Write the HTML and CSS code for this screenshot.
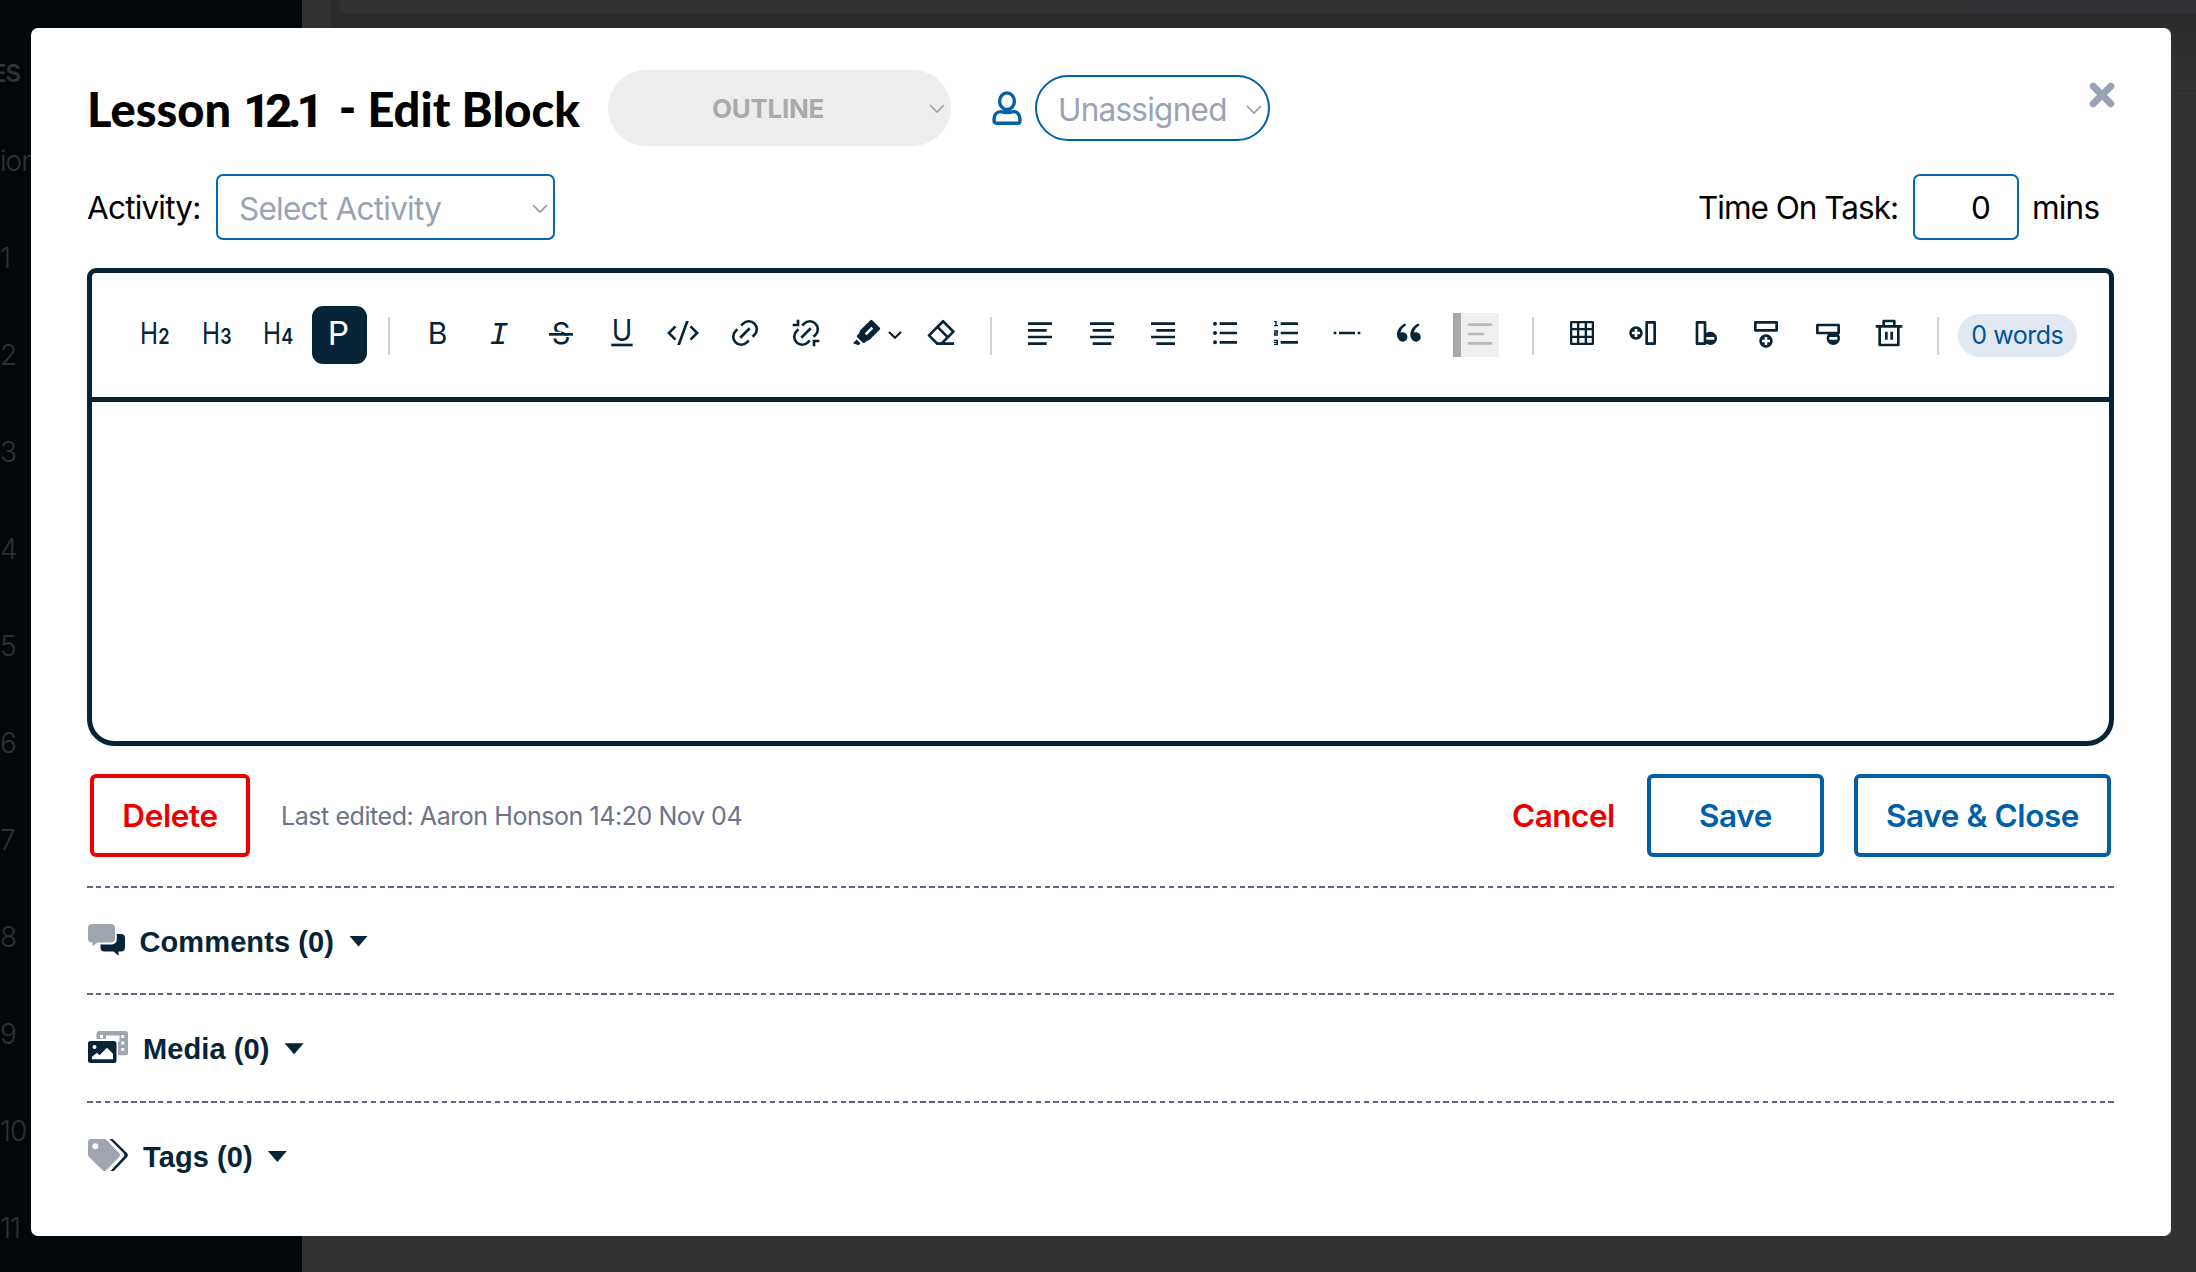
FILE: index.html
```html
<!DOCTYPE html>
<html lang="en">
<head>
<meta charset="utf-8">
<title>Lesson 12.1 - Edit Block</title>
<link rel="stylesheet" href="styles.css">
</head>
<body>
<div class="page">
  <aside class="sidebar">
    <div class="side-title">ES</div>
    <div class="side-item side-first">ion</div>
    <div class="side-item">1</div>
    <div class="side-item">2</div>
    <div class="side-item">3</div>
    <div class="side-item">4</div>
    <div class="side-item">5</div>
    <div class="side-item">6</div>
    <div class="side-item">7</div>
    <div class="side-item">8</div>
    <div class="side-item">9</div>
    <div class="side-item">10</div>
    <div class="side-item">11</div>
  </aside>
  <main class="backdrop">
    <div class="panel"><div class="panel-main"></div><div class="panel-side"></div></div>
    <div class="band"></div>
  </main>
</div>

<section class="modal">
  <header class="head">
    <h1 class="title">Lesson <span class="digits">12.1</span> <span class="dash">-</span> Edit Block</h1>
    <div class="status"><span class="status-text">OUTLINE</span>
      <svg class="chev" viewBox="0 0 16 9"><path d="M1 1l7 7 7-7"/></svg></div>
    <svg class="user" viewBox="0 0 30 34"><ellipse cx="15" cy="10.2" rx="7.4" ry="8.3"/><path d="M8.6 20.6c2.2 0 3.2 1 6.4 1s4.2-1 6.4-1c3.600 0 6.500 3 6.500 6.900v2.400c0 1.500-.9 2.400-2.300 2.400H4.400c-1.400 0-2.300-.9-2.300-2.400v-2.400c0-3.900 2.900-6.900 6.500-6.900z"/></svg>
    <div class="assignee"><span class="ph">Unassigned</span>
      <svg class="chev" viewBox="0 0 16 9"><path d="M1 1l7 7 7-7"/></svg></div>
    <svg class="close" viewBox="0 0 26 26"><path d="M4.200 4.200l17.600 17.600M21.800 4.200L4.200 21.800"/></svg>
  </header>

  <div class="meta">
    <label class="lbl">Activity:</label>
    <div class="select"><span class="ph">Select Activity</span>
      <svg class="chev" viewBox="0 0 16 9"><path d="M1 1l7 7 7-7"/></svg></div>
    <label class="lbl task">Time On Task:</label>
    <div class="num">0</div>
    <span class="lbl mins">mins</span>
  </div>

  <div class="editor">
    <div class="toolbar">
      <button class="tb"><svg viewBox="0 0 24 24"><text class="g" x="0.800" y="20" textLength="13.500" lengthAdjust="spacingAndGlyphs">H</text><text class="g sub" x="14.400" y="20" textLength="8.500" lengthAdjust="spacingAndGlyphs">2</text></svg></button>
      <button class="tb"><svg viewBox="0 0 24 24"><text class="g" x="0.800" y="20" textLength="13.500" lengthAdjust="spacingAndGlyphs">H</text><text class="g sub" x="14.400" y="20" textLength="8.500" lengthAdjust="spacingAndGlyphs">3</text></svg></button>
      <button class="tb"><svg viewBox="0 0 24 24"><text class="g" x="0.800" y="20" textLength="13.500" lengthAdjust="spacingAndGlyphs">H</text><text class="g sub" x="14.400" y="20" textLength="9" lengthAdjust="spacingAndGlyphs">4</text></svg></button>
      <button class="tb"><span class="on"><svg viewBox="0 0 24 24"><text class="g para" x="3.500" y="21" textLength="16" lengthAdjust="spacingAndGlyphs">P</text></svg></span></button>
      <i class="sep"></i>
      <button class="tb"><svg viewBox="0 0 24 24"><text class="g" x="4.400" y="20" textLength="14.800" lengthAdjust="spacingAndGlyphs">B</text></svg></button>
      <button class="tb"><svg viewBox="0 0 24 24"><text class="g mono" x="4.600" y="20">I</text></svg></button>
      <button class="tb"><svg viewBox="0 0 24 24"><text class="g" x="5" y="20" textLength="14" lengthAdjust="spacingAndGlyphs">S</text><path class="knock" d="M3 11h9v1H3zM12 14h9v1h-9z"/><path d="M3 12h18v2H3z"/></svg></button>
      <button class="tb"><svg viewBox="0 0 24 24"><text class="g" x="4.300" y="18" textLength="15.400" lengthAdjust="spacingAndGlyphs">U</text><path d="M4 20h16v2H4z"/></svg></button>
      <button class="tb"><svg viewBox="0 0 24 24"><path d="M24 12l-5.657 5.657-1.414-1.414L21.172 12l-4.243-4.243 1.414-1.414L24 12zM2.828 12l4.243 4.243-1.414 1.414L0 12l5.657-5.657L7.070 7.757 2.828 12zm6.960 9H7.660l6.552-18h2.128L9.788 21z"/></svg></button>
      <button class="tb"><svg viewBox="0 0 24 24"><path d="M18.364 15.536L16.950 14.120l1.414-1.414a5 5 0 1 0-7.071-7.071L9.879 7.050 8.464 5.636 9.880 4.222a7 7 0 0 1 9.900 9.900l-1.415 1.414zm-2.828 2.828l-1.415 1.414a7 7 0 0 1-9.900-9.900l1.415-1.414L7.050 9.880l-1.414 1.414a5 5 0 1 0 7.071 7.071l1.414-1.414 1.415 1.414zm-.708-10.607l1.415 1.415-7.071 7.070-1.415-1.414 7.071-7.070z"/></svg></button>
      <button class="tb"><svg viewBox="0 0 24 24"><path d="M17 17h5v2h-3v3h-2v-5zM7 7H2V5h3V2h2v5zm11.364 8.536L16.950 14.120l1.414-1.414a5 5 0 1 0-7.071-7.071L9.879 7.050 8.464 5.636 9.880 4.222a7 7 0 0 1 9.900 9.900l-1.415 1.414zm-2.828 2.828l-1.415 1.414a7 7 0 0 1-9.900-9.900l1.415-1.414L7.050 9.880l-1.414 1.414a5 5 0 1 0 7.071 7.071l1.414-1.414 1.415 1.414zm-.708-10.607l1.415 1.415-7.071 7.070-1.415-1.414 7.071-7.070z"/></svg></button>
      <button class="tb pen"><svg viewBox="0 0 24 24"><path fill-rule="evenodd" d="M21.607 8.050a1 1 0 0 1 0 1.414l-7.779 7.779-2.120.707-1.415 1.414a1 1 0 0 1-1.414 0l-4.243-4.243a1 1 0 0 1 0-1.414l1.414-1.414.707-2.121 7.779-7.779a1 1 0 0 1 1.414 0l5.657 5.657zm-6.364-.707l1.414 1.414-4.950 4.950-1.414-1.414 4.950-4.950zM4.283 16.890l2.828 2.829-1.414 1.414-4.243-1.414 2.828-2.829z"/></svg><svg class="drop" viewBox="0 0 14 8"><path d="M1 1l6 5.800L13 1"/></svg></button>
      <button class="tb"><svg viewBox="0 0 24 24"><path fill-rule="evenodd" d="M8.586 8.858l-4.950 4.950 5.194 5.194H11.172l3.778-3.780-6.364-6.364zM10 7.444l6.364 6.364 2.828-2.829-6.364-6.364L10 7.444zM14 19h7v2h-9l-3.998.002-6.487-6.487a1 1 0 0 1 0-1.414L12.120 2.494a1 1 0 0 1 1.415 0l7.778 7.778a1 1 0 0 1 0 1.414L14 19z"/></svg></button>
      <i class="sep"></i>
      <button class="tb"><svg viewBox="0 0 24 24"><path d="M3 4h18v2H3V4zm0 15h14v2H3v-2zm0-5h18v2H3v-2zm0-5h14v2H3V9z"/></svg></button>
      <button class="tb"><svg viewBox="0 0 24 24"><path d="M3 4h18v2H3V4zm2 15h14v2H5v-2zm-2-5h18v2H3v-2zm2-5h14v2H5V9z"/></svg></button>
      <button class="tb"><svg viewBox="0 0 24 24"><path d="M3 4h18v2H3V4zm4 15h14v2H7v-2zm-4-5h18v2H3v-2zm4-5h14v2H7V9z"/></svg></button>
      <button class="tb"><svg viewBox="0 0 24 24"><path d="M8 4h13v2H8V4zM4.500 6.500a1.500 1.500 0 1 1 0-3 1.500 1.500 0 0 1 0 3zm0 7a1.500 1.500 0 1 1 0-3 1.500 1.500 0 0 1 0 3zm0 6.900a1.500 1.500 0 1 1 0-3 1.500 1.500 0 0 1 0 3zM8 11h13v2H8v-2zm0 7h13v2H8v-2z"/></svg></button>
      <button class="tb"><svg viewBox="0 0 24 24"><path d="M8 4h13v2H8V4zM5 3v3h1v1H3V6h1V4H3V3h2zM3 14v-2.500h2V11H3v-1h3v2.500H4v.5h2v1H3zm2 5.500H3v-1h2V18H3v-1h3v4H3v-1h2v-.5zM8 11h13v2H8v-2zm0 7h13v2H8v-2z"/></svg></button>
      <button class="tb"><svg viewBox="0 0 24 24"><path d="M2 11h2v2H2v-2zm4 0h12v2H6v-2zm14 0h2v2h-2v-2z"/></svg></button>
      <button class="tb"><svg viewBox="0 0 24 24"><path d="M4.583 17.321C3.553 16.227 3 15 3 13.011c0-3.500 2.457-6.637 6.030-8.188l.893 1.378c-3.335 1.804-3.987 4.145-4.247 5.621.537-.278 1.240-.375 1.929-.311 1.804.167 3.226 1.648 3.226 3.489a3.500 3.500 0 0 1-3.500 3.500c-1.073 0-2.099-.490-2.748-1.179zm10 0C13.553 16.227 13 15 13 13.011c0-3.500 2.457-6.637 6.030-8.188l.893 1.378c-3.335 1.804-3.987 4.145-4.247 5.621.537-.278 1.240-.375 1.929-.311 1.804.167 3.226 1.648 3.226 3.489a3.500 3.500 0 0 1-3.500 3.500c-1.073 0-2.099-.490-2.748-1.179z"/></svg></button>
      <button class="tb off"><svg viewBox="0 0 24 24"><path d="M3 4h18v2H3V4zm0 7h12v2H3v-2zm0 7h18v2H3v-2z"/></svg></button>
      <i class="sep"></i>
      <button class="tb"><svg viewBox="0 0 24 24"><path fill-rule="evenodd" d="M4 3h16a1 1 0 0 1 1 1v16a1 1 0 0 1-1 1H4a1 1 0 0 1-1-1V4a1 1 0 0 1 1-1zM4.700 4.700v3.500h3.500V4.700zM10 4.700v3.500h4V4.700zM15.800 4.700v3.500h3.500V4.700zM4.700 10v4h3.500v-4zM10 10v4h4v-4zM15.800 10v4h3.500v-4zM4.700 15.800v3.500h3.500v-3.500zM10 15.800v3.500h4v-3.500zM15.800 15.800v3.500h3.500v-3.500z"/></svg></button>
      <button class="tb"><svg viewBox="0 0 24 24"><path d="M20 3a1 1 0 0 1 1 1v16a1 1 0 0 1-1 1h-6a1 1 0 0 1-1-1V4a1 1 0 0 1 1-1h6zm-1 2h-4v14h4V5zM6 7c2.761 0 5 2.239 5 5s-2.239 5-5 5-5-2.239-5-5 2.239-5 5-5zm1 2H5v1.999L3 11v2l2-.001V15h2v-2.001L9 13v-2l-2-.001V9z" fill-rule="evenodd"/></svg></button>
      <button class="tb"><svg viewBox="0 0 24 24"><path fill-rule="evenodd" d="M12 3c.552 0 1 .448 1 1v8c.835-.628 1.874-1 3-1 2.761 0 5 2.239 5 5s-2.239 5-5 5c-1.032 0-1.990-.313-2.787-.848L13 20c0 .552-.448 1-1 1H6c-.552 0-1-.448-1-1V4c0-.552.448-1 1-1h6zm-1 2H7v14h4V5zm8 10h-6v2h6v-2z"/></svg></button>
      <button class="tb"><svg viewBox="0 0 24 24"><path fill-rule="evenodd" d="M12 13c2.761 0 5 2.239 5 5s-2.239 5-5 5-5-2.239-5-5 2.239-5 5-5zm1 2h-2v1.999L9 17v2l2-.001V21h2v-2.001L15 19v-2l-2-.001V15zm7-12c.552 0 1 .448 1 1v6c0 .552-.448 1-1 1H4c-.552 0-1-.448-1-1V4c0-.552.448-1 1-1h16zM5 5v4h14V5H5z"/></svg></button>
      <button class="tb"><svg viewBox="0 0 24 24"><path fill-rule="evenodd" d="M20 5c.552 0 1 .448 1 1v6c0 .552-.448 1-1 1 .628.835 1 1.874 1 3 0 2.761-2.239 5-5 5s-5-2.239-5-5c0-1.126.372-2.165 1-3H4c-.552 0-1-.448-1-1V6c0-.552.448-1 1-1h16zm-7 10v2h6v-2h-6zm6-8H5v4h14V7z"/></svg></button>
      <button class="tb"><svg viewBox="0 0 24 24"><path fill-rule="evenodd" d="M17 6h5v2h-2v13a1 1 0 0 1-1 1H5a1 1 0 0 1-1-1V8H2V6h5V3a1 1 0 0 1 1-1h8a1 1 0 0 1 1 1v3zm1 2H6v12h12V8zm-9 3h2v6H9v-6zm4 0h2v6h-2v-6zM9 4v2h6V4H9z"/></svg></button>
      <i class="sep"></i>
      <span class="words">0 words</span>
    </div>
    <div class="canvas"></div>
  </div>

  <div class="actions">
    <button class="btn delete">Delete</button>
    <span class="edited">Last edited: Aaron Honson 14:20 Nov 04</span>
    <button class="cancel">Cancel</button>
    <button class="btn save">Save</button>
    <button class="btn save-close">Save &amp; Close</button>
  </div>

  <div class="fold">
    <svg class="ic-comments" viewBox="0 0 37 32"><path class="mute" d="M4 0h19a4 4 0 0 1 4 4v10.500a4 4 0 0 1-4 4H9.500L4.500 22.300V18.500H4a4 4 0 0 1-4-4V4a4 4 0 0 1 4-4z"/><path d="M28.800 10H33a4 4 0 0 1 4 4v9.500a4 4 0 0 1-4 4h-2.500v4.200l-5-4.200H16.500a4 4 0 0 1-4-4V20.500h11.300a5 5 0 0 0 5-5z"/></svg>
    <span class="fold-title">Comments (0)</span><i class="caret"></i>
  </div>
  <div class="fold">
    <svg class="ic-media" viewBox="0 0 40 32"><path class="mute" fill-rule="evenodd" d="M11 0h26.500A2.500 2.500 0 0 1 40 2.500v19.300a2.500 2.500 0 0 1-2.500 2.500H30V10.500h1.500V4.600H18V8H8.500V2.500A2.500 2.500 0 0 1 11 0zm1 4v3h3V4zm21.200 0v3h3V4zm0 6.500v3h3v-3zm0 6.500v3h3v-3z"/><path fill-rule="evenodd" d="M2.500 10h23.500a2.500 2.500 0 0 1 2.500 2.500v17a2.500 2.500 0 0 1-2.500 2.500H2.500A2.500 2.500 0 0 1 0 29.500v-17A2.500 2.500 0 0 1 2.500 10zM6.500 14a2 2 0 1 0 0 4 2 2 0 0 0 0-4zM4 28.300h21v-5.500l-6-6-7.500 7.500-2.500-2.500-5 4z"/></svg>
    <span class="fold-title">Media (0)</span><i class="caret"></i>
  </div>
  <div class="fold">
    <svg class="ic-tags" viewBox="0 0 40 32"><path class="mute" fill-rule="evenodd" d="M3 0h12.800a4 4 0 0 1 2.700 1l12.500 13a3 3 0 0 1 0 4.200L18.500 31a3 3 0 0 1-4.200 0L1 18a3.500 3.500 0 0 1-1-2.500V3a3 3 0 0 1 3-3zm4.300 4.300a3 3 0 1 0 0 6 3 3 0 0 0 0-6z"/><path d="M21.500 0h3.200l14 13.800a3.200 3.200 0 0 1 0 4.600L25.800 32H22.500l13-14a3 3 0 0 0 0-4z"/></svg>
    <span class="fold-title">Tags (0)</span><i class="caret"></i>
  </div>
</section>
</body>
</html>
```
FILE: styles.css
```css
* { box-sizing: border-box; }
body { margin: 0; width: 2196px; height: 1272px; overflow: hidden; background: #323232; font-family: Inter, "Liberation Sans", sans-serif; color: #000; }
button { padding: 0; border: 0; background: none; font: inherit; color: inherit; }
.page { display: flex; height: 1272px; }
.sidebar { width: 302px; background: #02080a; color: #303234; padding-top: 61px; }
.side-title { height: 26px; line-height: 26px; font-size: 24px; font-weight: 600; margin-left: -8px; letter-spacing: -1px; }
.side-item { height: 97px; line-height: 40px; font-size: 28px; font-weight: 300; white-space: nowrap; letter-spacing: -1px; }
.side-first { margin-top: 54px; }
.backdrop { flex: 1; }
.panel { display: flex; height: 13px; margin-left: 29px; border-left: 9px solid #2d2d2d; }
.panel-main { flex: 1; background: #333; }
.panel-side { width: 223px; background: #303236; }
.band { height: 78px; background: linear-gradient(#2b2b2b, #323232); border-bottom: 1px solid #2b2b2b; margin-left: 29px; }

.modal { position: absolute; left: 31px; top: 28px; width: 2140px; height: 1208px; padding: 42px 57px 0 56px; background: #fff; border-radius: 7px; }
.chev { width: 16px; height: 9px; fill: none; stroke: #8f97a6; stroke-width: 1.6; }
.head { display: flex; align-items: center; height: 76px; }
.title { width: 521px; margin: 0; padding-top: 3px; font-family: Lato, sans-serif; font-size: 47px; line-height: 76px; font-weight: 900; white-space: nowrap; }
.digits { font-family: Roboto, sans-serif; font-weight: 800; letter-spacing: -5px; margin: 0 9px 0 1px; }
.dash { position: relative; top: -2px; }
.status { width: 343px; height: 76px; border-radius: 38px; background: #ededed; color: #aaa; display: flex; align-items: center; padding: 1px 6px 0 104px; justify-content: space-between; font-size: 26px; font-weight: 700; letter-spacing: -.3px; }
.status .chev { stroke: #a0a0a0; }
.user { width: 30px; height: 34px; margin: 0 13px 0 41px; fill: none; stroke: #0060a8; stroke-width: 3.4; }
.assignee { width: 235px; height: 66px; border: 2px solid #0060a8; border-radius: 33px; display: flex; align-items: center; justify-content: space-between; padding: 2px 6px 0 21px; }
.ph { font-size: 31.500px; color: #9aa3b5; white-space: nowrap; letter-spacing: -.75px; }
.close { width: 26px; height: 26px; margin-left: auto; margin-right: -1px; margin-bottom: 26px; fill: none; stroke: #9aa3b5; stroke-width: 7; stroke-linecap: round; }
.meta { display: flex; align-items: center; height: 66px; margin-top: 28px; font-size: 31.500px; letter-spacing: -.8px; white-space: nowrap; }
.lbl { width: 129px; padding-top: 1px; }
.select { width: 339px; height: 66px; border: 2px solid #0068b4; border-radius: 7px; display: flex; align-items: center; justify-content: space-between; padding: 2px 5px 0 21px; }
.task { width: 215px; margin-left: auto; letter-spacing: -1px; }
.num { width: 106px; height: 66px; border: 2px solid #0068b4; border-radius: 7px; line-height: 63px; text-align: right; padding-right: 27px; }
.mins { width: 82px; margin-left: 13px; }

.editor { height: 478px; margin-top: 28px; border: 5px solid #062436; border-radius: 9px 9px 27px 27px; }
.toolbar { display: flex; align-items: center; height: 129px; padding-left: 32.500px; padding-bottom: 1px; border-bottom: 5px solid #062436; color: #062436; }
.tb { width: 61.400px; height: 58px; display: flex; align-items: center; justify-content: center; flex: none; }
.tb svg { width: 32px; height: 32px; fill: #062436; margin-bottom: 4px; display: block; flex: none; overflow: visible; }
.g { font-family: Inter, sans-serif; font-size: 22px; font-weight: 400; }
.sub { font-size: 16.500px; font-weight: 600; }
.mono { font-family: "Liberation Mono", monospace; font-style: italic; font-size: 24px; }
.knock { fill: #fff; }
.on { width: 55px; height: 58px; border-radius: 11px; background: #062436; display: flex; align-items: center; justify-content: center; }
.tb .on svg { fill: #fff; }
.para { font-size: 24.800px; }
.sep { width: 37px; height: 38px; flex: none; background: linear-gradient(#cdd3da, #cdd3da) center / 2px 100% no-repeat; margin-top: 3px; }
.pen { width: 74.500px; justify-content: flex-start; padding-left: 14.700px; }
.tb .drop { width: 14px; height: 8px; margin: 0 0 0 5px; fill: none; stroke: #062436; stroke-width: 2.2; }
.off { width: 46px; height: 44px; margin: 0 15px 0 14px; background: #efefef; border-left: 8px solid #a9a9a9; }
.off svg { fill: #b9b9b9; margin-bottom: 2px; }
.words { width: 119px; height: 43px; margin: 1px 0 0 1px; border-radius: 22px; background: #e1e8f2; color: #005596; font-size: 25px; letter-spacing: -.5px; line-height: 43px; text-align: center; }

.actions { display: flex; align-items: center; height: 83px; margin-top: 28px; padding-left: 3px; }
.btn { height: 83px; border: 4px solid #005fa6; border-radius: 6px; color: #005fa6; font-size: 31.500px; letter-spacing: -.4px; font-weight: 600; white-space: nowrap; }
.delete { width: 160px; border-color: #eb0000; color: #eb0000; }
.edited { margin-left: 31px; font-size: 25px; letter-spacing: -.44px; color: #6b7488; white-space: nowrap; }
.cancel { margin-left: auto; width: 135px; text-align: left; color: #eb0000; font-size: 31.500px; letter-spacing: -.5px; font-weight: 600; }
.save { width: 177px; }
.save-close { width: 257px; margin: 0 3px 0 30px; }

.fold { display: flex; height: 107.700px; padding: 38px 0 0 .5px; background: repeating-linear-gradient(90deg, #5d6680 0 5.500px, transparent 5.500px 8.866px) 0 0 / 100% 2px no-repeat; }
.actions + .fold { margin-top: 28.600px; }
.fold svg { fill: #062436; flex: none; }
.fold svg .mute { fill: #9fa6b0; }
.ic-comments { width: 37px; height: 32px; margin-right: 15px; }
.ic-media, .ic-tags { width: 40px; height: 32px; margin-right: 15.500px; }
.fold-title { font-family: "Liberation Sans", sans-serif; font-weight: 700; font-size: 29px; letter-spacing: .1px; line-height: 36px; color: #062436; white-space: nowrap; }
.caret { width: 19px; height: 11px; margin: 12px 0 0 15px; background: #062436; clip-path: polygon(0 0, 100% 0, 50% 100%); }
```
